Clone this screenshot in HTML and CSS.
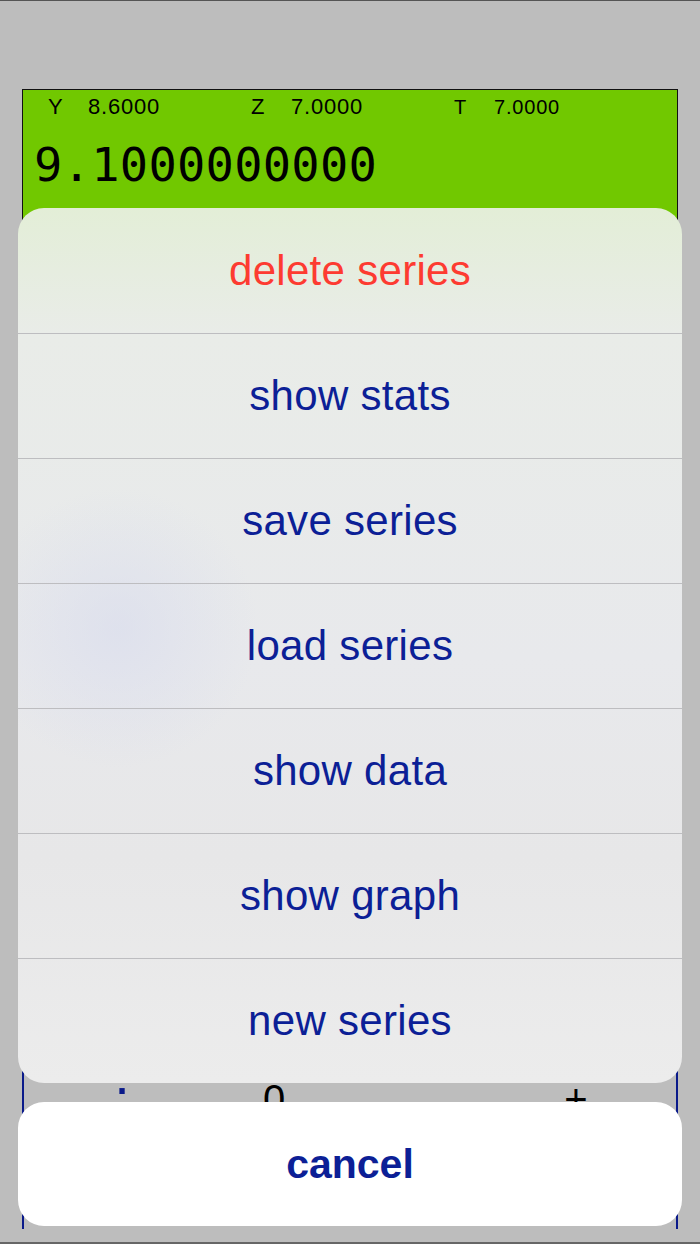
FILE: index.html
```html
<!DOCTYPE html>
<html lang="en">

<head>
  <meta charset="UTF-8">
  <meta name="viewport" content="width=device-width, initial-scale=1.0">
  <title>RPN Stats</title>
  <link rel="stylesheet" href="styles.css">
</head>

<body>
  <div class="screen">

    <div class="calc">
      <div class="display">
        <div class="stack">
          <span class="reg"><b>Y</b>8.6000</span>
          <span class="reg"><b>Z</b>7.0000</span>
          <span class="reg reg-small"><b>T</b>7.0000</span>
        </div>
        <div class="xreg">9.1000000000</div>
      </div>

      <div class="keypad">
        <div class="key-row">
          <span class="key key-dot">.</span>
          <span class="key">0</span>
          <span class="key"></span>
          <span class="key">+</span>
        </div>
      </div>
    </div>

    <div class="sheet">
      <div class="action danger">delete series</div>
      <div class="action">show stats</div>
      <div class="action">save series</div>
      <div class="action">load series</div>
      <div class="action">show data</div>
      <div class="action">show graph</div>
      <div class="action">new series</div>
    </div>

    <div class="cancel">cancel</div>

  </div>
</body>

</html>
```

FILE: styles.css
```css
* {
  padding: 0;
  border: 0;
  margin: 0;
  box-sizing: border-box;
}

body {
  font-family: "Liberation Sans", Arial, sans-serif;
  background-color: #bdbdbd;
}

.screen {
  position: relative;
  height: 1244px;
  padding-top: 88px;
  border-top: 1px solid #555;
  border-bottom: 2px solid #666;
  overflow: hidden;
}

.calc {
  margin: 0 22px;
}

.display {
  height: 200px;
  background-color: #71c800;
  border: 1px solid #111;
  border-bottom: 0;
  color: #000;
}

.stack {
  display: flex;
  padding: 2px 0 0 25px;
  height: 44px;
}

.reg {
  width: 203px;
  font-size: 22px;
  line-height: 30px;
  letter-spacing: 0.8px;
}

.reg b {
  font-weight: normal;
  display: inline-block;
  width: 40px;
}

.reg-small {
  font-size: 20px;
}

.xreg {
  font-family: "DejaVu Sans Mono", monospace;
  font-size: 47px;
  line-height: 50px;
  padding: 6px 0 0 11px;
  letter-spacing: 0.3px;
}

.keypad {
  height: 940px;
  border-left: 2px solid #0a1a8a;
  border-right: 2px solid #0a1a8a;
  display: flex;
  flex-direction: column;
  justify-content: flex-end;
}

.key-row {
  height: 150px;
  display: grid;
  grid-template-columns: 196px 108px 1fr 148px;
  grid-template-rows: 40px;
  padding-right: 26px;
}

.key {
  text-align: center;
  font-size: 40px;
  line-height: 40px;
}

.key-dot {
  color: #0a1a8a;
  font-size: 56px;
  line-height: 56px;
  margin-top: -32px;
}

.sheet {
  position: absolute;
  left: 18px;
  top: 207px;
  width: 664px;
  height: 875px;
  border-radius: 26px;
  overflow: hidden;
  background:
    radial-gradient(circle at 100px 420px, rgba(214, 218, 238, 0.55), rgba(214, 218, 238, 0) 140px),
    linear-gradient(#e3eed7 0, #e9ece8 125px, #e8e9ec 450px, #e7e7e8 650px, #ececec 875px);
}

.action {
  height: 125px;
  display: flex;
  align-items: center;
  justify-content: center;
  font-size: 42px;
  letter-spacing: 0.3px;
  color: #0c1f96;
  border-top: 1px solid #bdbdc0;
}

.action:first-child {
  border-top: 0;
}

.danger {
  color: #fd3b31;
}

.cancel {
  position: absolute;
  left: 18px;
  top: 1101px;
  width: 664px;
  height: 124px;
  border-radius: 26px;
  background-color: #fff;
  display: flex;
  align-items: center;
  justify-content: center;
  font-size: 41px;
  font-weight: bold;
  color: #0c1f96;
}
```
